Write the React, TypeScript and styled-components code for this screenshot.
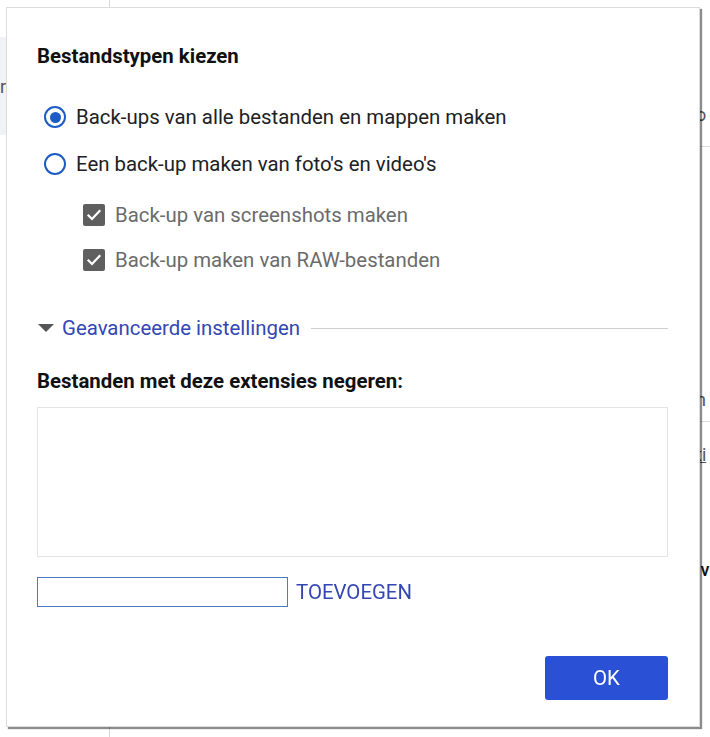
import React, { useState } from 'react';
import styled, { createGlobalStyle } from 'styled-components';

const GlobalStyle = createGlobalStyle`
  html, body {
    margin: 0;
    padding: 0;
    background: #ffffff;
  }
  body {
    font-family: Roboto, "Noto Sans", Arial, sans-serif;
    color: #202124;
  }
`;

const TEXT = '20.4px';

// Page behind the modal: only its edges are visible
const Page = styled.div`
  position: relative;
  width: 710px;
  height: 737px;
  overflow: hidden;
  display: grid;
  grid-template-columns: 110px 1fr 14px;
  background: #fff;
`;

const Sidebar = styled.div`
  border-right: 1px solid #d6d6d6;
  padding-top: 37px;
`;

const SidebarItem = styled.div`
  height: 98px;
  background: #f1f2f5;
  font-size: 18px;
  color: #555;
  display: flex;
  align-items: center;
`;

const Main = styled.div``;

const RightColumn = styled.div`
  display: flex;
  flex-direction: column;
  font-size: 18px;
  line-height: 22px;
  color: #444;
`;

const Peek = styled.div<{ $h: number; $pad?: number; $line?: boolean; $bold?: boolean; $under?: boolean }>`
  height: ${(p) => p.$h}px;
  box-sizing: border-box;
  padding-top: ${(p) => p.$pad ?? 0}px;
  border-bottom: ${(p) => (p.$line ? '1px solid #dcdcdc' : 'none')};
  font-weight: ${(p) => (p.$bold ? 500 : 400)};
  color: ${(p) => (p.$bold ? '#111' : '#555')};
  text-decoration: ${(p) => (p.$under ? 'underline' : 'none')};
  white-space: nowrap;
  overflow: hidden;
`;

const Dialog = styled.div`
  position: absolute;
  left: 6px;
  top: 7px;
  width: 694px;
  height: 720px;
  box-sizing: border-box;
  background: #fff;
  border: 1px solid #dcdcdc;
  box-shadow: 2px 2px 1px rgba(0, 0, 0, 0.45);
  padding: 36px 31px 26px 30px;
  display: flex;
  flex-direction: column;
`;

const Title = styled.h2`
  margin: 0 0 37px 0;
  font-size: ${TEXT};
  line-height: 24px;
  font-weight: 700;
  color: #111;
`;

const Options = styled.div`
  display: flex;
  flex-direction: column;
  gap: 23px;
`;

const RadioRow = styled.label`
  display: flex;
  align-items: center;
  gap: 10px;
  padding-left: 7px;
  font-size: ${TEXT};
  line-height: 24px;
  color: #202124;
  cursor: pointer;
`;

const RadioCircle = styled.span<{ $checked: boolean }>`
  width: 22px;
  height: 22px;
  box-sizing: border-box;
  border-radius: 50%;
  border: 2px solid #1c5cc4;
  display: flex;
  align-items: center;
  justify-content: center;
  flex: none;

  &::after {
    content: '';
    width: 11px;
    height: 11px;
    border-radius: 50%;
    background: #1c5cc4;
    display: ${(p) => (p.$checked ? 'block' : 'none')};
  }
`;

const SubOptions = styled.div`
  display: flex;
  flex-direction: column;
  gap: 21px;
  margin-top: 27px;
  padding-left: 46px;
`;

const CheckRow = styled.label`
  display: flex;
  align-items: center;
  gap: 10px;
  font-size: ${TEXT};
  line-height: 24px;
  color: #6b6b6b;
`;

const CheckBox = styled.span`
  width: 22px;
  height: 22px;
  border-radius: 2px;
  background: #5f5f5f;
  display: flex;
  align-items: center;
  justify-content: center;
  flex: none;
`;

const AdvancedRow = styled.div`
  display: flex;
  align-items: center;
  margin-top: 44px;
  gap: 8px;
  padding-left: 1px;
`;

const Caret = styled.span`
  width: 0;
  height: 0;
  border-left: 8px solid transparent;
  border-right: 8px solid transparent;
  border-top: 8px solid #555;
  flex: none;
`;

const AdvancedLink = styled.span`
  font-size: ${TEXT};
  line-height: 24px;
  color: #3446b4;
  white-space: nowrap;
`;

const Rule = styled.div`
  flex: 1;
  height: 1px;
  background: #cfcfcf;
  margin-left: 3px;
`;

const SectionLabel = styled.div`
  margin-top: 29px;
  font-size: ${TEXT};
  line-height: 24px;
  font-weight: 700;
  color: #111;
`;

const ExtList = styled.div`
  margin-top: 14px;
  height: 150px;
  box-sizing: border-box;
  border: 1px solid #e4e4e4;
`;

const AddRow = styled.div`
  display: flex;
  align-items: center;
  gap: 8px;
  margin-top: 20px;
`;

const ExtInput = styled.input`
  width: 251px;
  height: 30px;
  box-sizing: border-box;
  border: 1px solid #4a7cc4;
  border-radius: 0;
  padding: 0 6px;
  font-size: 18px;
  font-family: inherit;
  outline: none;
  background: #fff;
  caret-color: #555;
`;

const TextButton = styled.button`
  border: none;
  background: none;
  padding: 0;
  font-family: inherit;
  font-size: ${TEXT};
  line-height: 24px;
  color: #3446b4;
  cursor: pointer;
`;

const Footer = styled.div`
  margin-top: auto;
  display: flex;
  justify-content: flex-end;
`;

const OkButton = styled.button`
  width: 123px;
  height: 44px;
  border: none;
  border-radius: 3px;
  background: #2a50d5;
  color: #fff;
  font-family: inherit;
  font-size: ${TEXT};
  cursor: pointer;
`;

const CheckMark = () => (
  <svg width="16" height="16" viewBox="0 0 16 16" fill="none">
    <path d="M2.5 8.5l3.5 3.5 7.5-8" stroke="#fff" strokeWidth="2.2" strokeLinecap="square" />
  </svg>
);

export default function App() {
  const [mode, setMode] = useState<'all' | 'media'>('all');

  return (
    <>
      <GlobalStyle />
      <Page>
        <Sidebar>
          <SidebarItem>r</SidebarItem>
        </Sidebar>
        <Main />
        <RightColumn>
          <Peek $h={147} $pad={104} $line>o</Peek>
          <Peek $h={242} />
          <Peek $h={33} $line>n</Peek>
          <Peek $h={137} $pad={22} $under>ti</Peek>
          <Peek $h={30} $bold>iv</Peek>
        </RightColumn>

        <Dialog>
          <Title>Bestandstypen kiezen</Title>
          <Options>
            <RadioRow onClick={() => setMode('all')}>
              <RadioCircle $checked={mode === 'all'} />
              Back-ups van alle bestanden en mappen maken
            </RadioRow>
            <RadioRow onClick={() => setMode('media')}>
              <RadioCircle $checked={mode === 'media'} />
              Een back-up maken van foto's en video's
            </RadioRow>
          </Options>
          <SubOptions>
            <CheckRow>
              <CheckBox>
                <CheckMark />
              </CheckBox>
              Back-up van screenshots maken
            </CheckRow>
            <CheckRow>
              <CheckBox>
                <CheckMark />
              </CheckBox>
              Back-up maken van RAW-bestanden
            </CheckRow>
          </SubOptions>
          <AdvancedRow>
            <Caret />
            <AdvancedLink>Geavanceerde instellingen</AdvancedLink>
            <Rule />
          </AdvancedRow>
          <SectionLabel>Bestanden met deze extensies negeren:</SectionLabel>
          <ExtList />
          <AddRow>
            <ExtInput autoFocus />
            <TextButton>TOEVOEGEN</TextButton>
          </AddRow>
          <Footer>
            <OkButton>OK</OkButton>
          </Footer>
        </Dialog>
      </Page>
    </>
  );
}
